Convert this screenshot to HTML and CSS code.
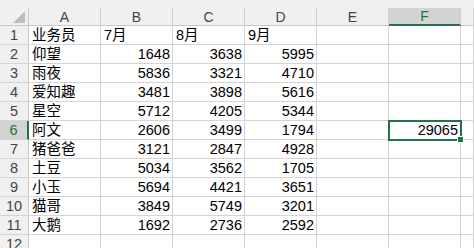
FILE: index.html
```html
<!DOCTYPE html>
<html lang="zh">
<head>
<meta charset="utf-8">
<title>Sheet</title>
<link rel="stylesheet" href="styles.css">
</head>
<body>
<div class="topbar"></div>
<div class="sheet">
  <div class="corner"><svg width="12" height="12" viewBox="0 0 12 12"><polygon points="0,12 12,12 12,0" fill="#bdbdbd"/></svg></div>
  <div class="ch">A</div><div class="ch">B</div><div class="ch">C</div><div class="ch">D</div><div class="ch">E</div><div class="ch ch-sel">F</div><div class="ch"></div>

  <div class="rh">1</div><div class="c">业务员</div><div class="c">7月</div><div class="c">8月</div><div class="c">9月</div><div class="c"></div><div class="c"></div><div class="c"></div>
  <div class="rh">2</div><div class="c">仰望</div><div class="c n">1648</div><div class="c n">3638</div><div class="c n">5995</div><div class="c"></div><div class="c"></div><div class="c"></div>
  <div class="rh">3</div><div class="c">雨夜</div><div class="c n">5836</div><div class="c n">3321</div><div class="c n">4710</div><div class="c"></div><div class="c"></div><div class="c"></div>
  <div class="rh">4</div><div class="c">爱知趣</div><div class="c n">3481</div><div class="c n">3898</div><div class="c n">5616</div><div class="c"></div><div class="c"></div><div class="c"></div>
  <div class="rh">5</div><div class="c">星空</div><div class="c n">5712</div><div class="c n">4205</div><div class="c n">5344</div><div class="c"></div><div class="c"></div><div class="c"></div>
  <div class="rh rh-sel">6</div><div class="c">阿文</div><div class="c n">2606</div><div class="c n">3499</div><div class="c n">1794</div><div class="c"></div><div class="c n active">29065<span class="handle"></span></div><div class="c"></div>
  <div class="rh">7</div><div class="c">猪爸爸</div><div class="c n">3121</div><div class="c n">2847</div><div class="c n">4928</div><div class="c"></div><div class="c"></div><div class="c"></div>
  <div class="rh">8</div><div class="c">土豆</div><div class="c n">5034</div><div class="c n">3562</div><div class="c n">1705</div><div class="c"></div><div class="c"></div><div class="c"></div>
  <div class="rh">9</div><div class="c">小玉</div><div class="c n">5694</div><div class="c n">4421</div><div class="c n">3651</div><div class="c"></div><div class="c"></div><div class="c"></div>
  <div class="rh">10</div><div class="c">猫哥</div><div class="c n">3849</div><div class="c n">5749</div><div class="c n">3201</div><div class="c"></div><div class="c"></div><div class="c"></div>
  <div class="rh">11</div><div class="c">大鹅</div><div class="c n">1692</div><div class="c n">2736</div><div class="c n">2592</div><div class="c"></div><div class="c"></div><div class="c"></div>
  <div class="rh">12</div><div class="c"></div><div class="c"></div><div class="c"></div><div class="c"></div><div class="c"></div><div class="c"></div><div class="c"></div>
</div>
</body>
</html>
```
FILE: styles.css
```css
html, body {
  margin: 0;
  padding: 0;
  background: #ffffff;
  overflow: hidden;
  width: 474px;
  height: 248px;
}
body {
  font-family: "Liberation Sans", "Noto Sans CJK SC", sans-serif;
  font-size: 14.5px;
  color: #000;
}
.topbar {
  height: 8px;
  background: #f0f0f0;
}
.sheet {
  display: grid;
  grid-template-columns: 29px repeat(6, 72px) minmax(0, 1fr);
  grid-template-rows: 18px repeat(12, 19px);
  width: 474px;
}
.corner, .ch, .rh, .c {
  box-sizing: border-box;
  white-space: nowrap;
}
.corner {
  background: #f0f0f0;
  border-right: 1px solid #c8c8c8;
  border-bottom: 1px solid #c8c8c8;
  display: flex;
  align-items: flex-end;
  justify-content: flex-end;
  padding: 0 3px 2px 0;
}
.corner svg { display: block; }
.ch {
  background: #f0f0f0;
  border-right: 1px solid #cfcfcf;
  border-bottom: 1px solid #c8c8c8;
  color: #444;
  display: flex;
  align-items: flex-end;
  justify-content: center;
  line-height: 16px;
  font-size: 14px;
}
.ch-sel {
  background: #d3d3d3;
  color: #217346;
  border-bottom: 2px solid #217346;
}
.rh {
  background: #f0f0f0;
  border-right: 1px solid #c8c8c8;
  border-bottom: 1px solid #d4d4d4;
  color: #444;
  display: flex;
  align-items: flex-end;
  justify-content: center;
  line-height: 18px;
  font-size: 14.5px;
}
.rh-sel {
  background: #d3d3d3;
  color: #217346;
  border-right: 2px solid #217346;
}
.c {
  border-right: 1px solid #d4d4d4;
  border-bottom: 1px solid #d4d4d4;
  display: flex;
  align-items: flex-end;
  padding: 0 2px 0 3px;
  line-height: 18px;
}
.n {
  justify-content: flex-end;
}
.active {
  position: relative;
  outline: 2px solid #217346;
  outline-offset: -1px;
}
.handle {
  position: absolute;
  right: -4px;
  bottom: -4px;
  width: 5px;
  height: 5px;
  background: #217346;
  border: 1px solid #fff;
}
```
